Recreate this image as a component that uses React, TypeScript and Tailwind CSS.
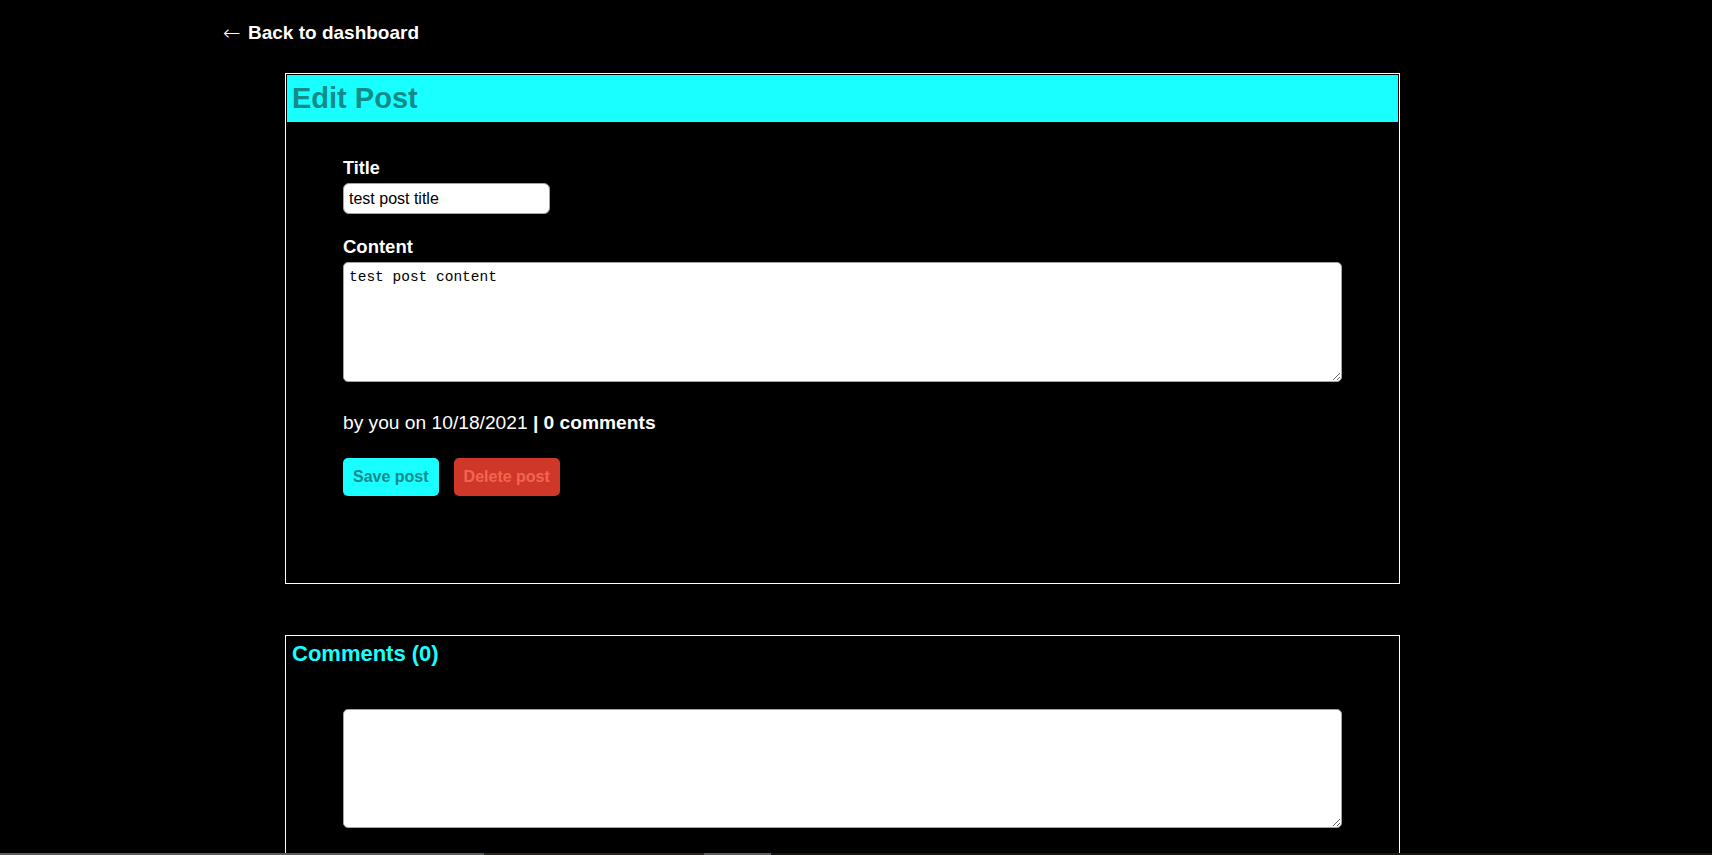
import React from "react";

export default function App() {
  return (
    <div className="min-h-screen bg-black pt-[22px] pb-[40px] font-['Liberation_Sans',Arial,sans-serif] text-white">
      <a href="#" className="ml-[223px] flex w-fit items-center text-[19px] leading-[22px] font-bold text-white no-underline">
        <span className="inline-block w-[20px] font-['DejaVu_Sans',sans-serif] text-[21px] leading-[22px] font-extralight">←</span>
        <span className="ml-[5px]">Back to dashboard</span>
      </a>

      <div className="mt-[29px] ml-[285px] w-[1115px] border border-white p-[1px]">
        <div className="flex h-[47px] items-center bg-[#19ffff] pl-[5px]">
          <h1 className="text-[29px] leading-[47px] font-bold text-[#128b8b]">Edit Post</h1>
        </div>
        <div className="flex flex-col px-[56px] pt-[36px] pb-[86px]">
          <label className="text-[18px] leading-[21px] font-bold">Title</label>
          <input
            defaultValue="test post title"
            className="mt-[4px] h-[31px] w-[207px] rounded-[6px] border border-[#a3a3a3] bg-white px-[5px] text-[16px] text-black outline-none"
          />
          <label className="mt-[22px] text-[18.5px] leading-[21px] font-bold">Content</label>
          <textarea
            defaultValue="test post content"
            className="mt-[5px] h-[120px] w-[999px] rounded-[5px] border border-[#a3a3a3] bg-white px-[5px] pt-[6px] font-['Liberation_Mono',monospace] text-[14.5px] leading-[17px] text-black outline-none"
          />
          <p className="mt-[30px] text-[19.2px] leading-[22px]">
            by you on 10/18/2021 <span className="font-bold">| 0 comments</span>
          </p>
          <div className="mt-[24px] flex gap-[15px]">
            <button className="h-[38px] rounded-[5px] bg-[#19ffff] px-[10px] text-[16px] font-bold text-[#128b8b]">
              Save post
            </button>
            <button className="h-[38px] rounded-[5px] bg-[#cf3729] px-[10px] text-[16px] font-bold text-[#f26650]">
              Delete post
            </button>
          </div>
        </div>
      </div>

      <div className="mt-[51px] ml-[285px] w-[1115px] border border-white pt-[5px] pb-[120px]">
        <h2 className="pl-[6px] text-[22px] leading-[26px] font-bold text-[#19ffff]">Comments (0)</h2>
        <div className="px-[57px] pt-[42px]">
          <textarea className="h-[119px] w-[999px] rounded-[5px] border border-[#a3a3a3] bg-white px-[5px] pt-[6px] font-['Liberation_Mono',monospace] text-[14.5px] text-black outline-none" />
        </div>
      </div>

      <div className="fixed bottom-0 left-0 flex h-[2px] w-full">
        <div className="w-[484px] bg-[#5c5c5c]" />
        <div className="w-[220px] bg-[#2a2520]" />
        <div className="w-[67px] bg-[#5c5c5c]" />
        <div className="flex-1 bg-[#1a1712]" />
      </div>
    </div>
  );
}
